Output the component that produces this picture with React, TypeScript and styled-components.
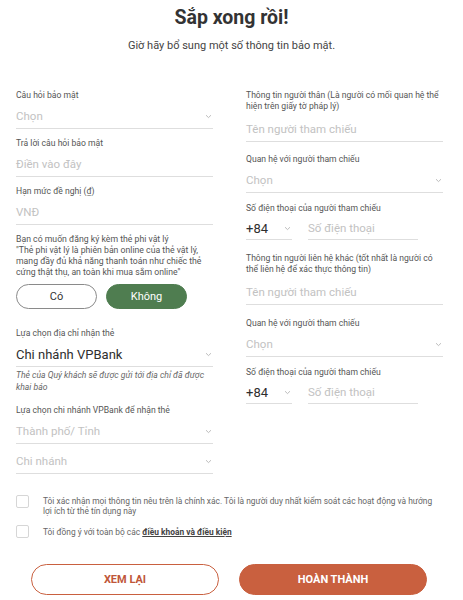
import React, { useState } from "react";
import styled, { createGlobalStyle } from "styled-components";

const GlobalStyle = createGlobalStyle`
	body {
		margin: 0;
		background: #ffffff;
		font-family: Roboto, "Noto Sans", "Liberation Sans", sans-serif;
	}
`;

function Chevron(): JSX.Element {
	return (
		<svg width="7" height="5" viewBox="0 0 7 5">
			<path d="M1 1.2 L3.5 3.6 L6 1.2" fill="none" stroke="#b5b5b5" strokeWidth="0.9" />
		</svg>
	);
}

interface SelectProps {
	value: string;
	filled?: boolean;
}

function SelectField(props: SelectProps): JSX.Element {
	return (
		<Field>
			<FieldText $filled={props.filled}>{props.value}</FieldText>
			<Chevron />
		</Field>
	);
}

function PhoneRow(): JSX.Element {
	return (
		<Phone>
			<Country>
				<FieldText $filled>+84</FieldText>
				<Chevron />
			</Country>
			<PhoneInput>
				<FieldText>Số điện thoại</FieldText>
			</PhoneInput>
		</Phone>
	);
}

function App(): JSX.Element {
	const [physical, setPhysical] = useState<boolean>(false);
	const [confirm, setConfirm] = useState<boolean>(false);
	const [agree, setAgree] = useState<boolean>(false);

	return (
		<Page>
			<GlobalStyle />
			<Title>Sắp xong rồi!</Title>
			<Subtitle>Giờ hãy bổ sung một số thông tin bảo mật.</Subtitle>

			<Form>
				<Column>
					<Group>
						<Label>Câu hỏi bảo mật</Label>
						<SelectField value="Chọn" />
					</Group>
					<Group>
						<Label>Trả lời câu hỏi bảo mật</Label>
						<Field>
							<FieldText>Điền vào đây</FieldText>
						</Field>
					</Group>
					<Group>
						<Label>Hạn mức đề nghị (₫)</Label>
						<Field>
							<FieldText>VNĐ</FieldText>
						</Field>
					</Group>
					<Paragraph>
						Bạn có muốn đăng ký kèm thẻ phi vật lý
						<br />
						"Thẻ phi vật lý là phiên bản online của thẻ vật lý, mang đầy đủ khả năng
						thanh toán như chiếc thẻ cứng thật thụ, an toàn khi mua sắm online"
					</Paragraph>
					<Toggle>
						<Choice $active={physical} onClick={() => setPhysical(true)}>
							Có
						</Choice>
						<Choice $active={!physical} onClick={() => setPhysical(false)}>
							Không
						</Choice>
					</Toggle>
					<Group $mt={19} $mb={0}>
						<Label>Lựa chọn địa chỉ nhận thẻ</Label>
						<SelectField value="Chi nhánh VPBank" filled />
						<Note>Thẻ của Quý khách sẽ được gửi tới địa chỉ đã được khai báo</Note>
					</Group>
					<Group $mt={12} $mb={0}>
						<Label>Lựa chọn chi nhánh VPBank để nhận thẻ</Label>
						<SelectField value="Thành phố/ Tỉnh" />
						<Spacer />
						<SelectField value="Chi nhánh" />
					</Group>
				</Column>

				<Column>
					<Group $mb={12}>
						<Label $multi>
							Thông tin người thân (Là người có mối quan hệ thể hiện trên giấy tờ pháp lý)
						</Label>
						<Field>
							<FieldText>Tên người tham chiếu</FieldText>
						</Field>
					</Group>
					<Group $mb={10}>
						<Label>Quan hệ với người tham chiếu</Label>
						<SelectField value="Chọn" />
					</Group>
					<Group $mb={13}>
						<Label>Số điện thoại của người tham chiếu</Label>
						<PhoneRow />
					</Group>
					<Group $mb={13}>
						<Label $multi>
							Thông tin người liên hệ khác (tốt nhất là người có thể liên hệ để xác thực
							thông tin)
						</Label>
						<Field>
							<FieldText>Tên người tham chiếu</FieldText>
						</Field>
					</Group>
					<Group $mb={10}>
						<Label>Quan hệ với người tham chiếu</Label>
						<SelectField value="Chọn" />
					</Group>
					<Group $mb={0}>
						<Label>Số điện thoại của người tham chiếu</Label>
						<PhoneRow />
					</Group>
				</Column>
			</Form>

			<Checks>
				<CheckRow>
					<Box $checked={confirm} onClick={() => setConfirm(!confirm)} />
					<CheckText>
						Tôi xác nhận mọi thông tin nêu trên là chính xác. Tôi là người duy nhất kiểm
						soát các hoạt động và hướng lợi ích từ thẻ tín dụng này
					</CheckText>
				</CheckRow>
				<CheckRow $center>
					<Box $checked={agree} onClick={() => setAgree(!agree)} />
					<CheckText>
						Tôi đồng ý với toàn bộ các <Terms>điều khoản và điều kiện</Terms>
					</CheckText>
				</CheckRow>
			</Checks>

			<Actions>
				<ActionButton>XEM LẠI</ActionButton>
				<ActionButton $primary>HOÀN THÀNH</ActionButton>
			</Actions>
		</Page>
	);
}

const Page = styled.div`
	width: 463px;
	height: 600px;
	padding-top: 6px;
	box-sizing: border-box;
	overflow: hidden;
	color: #333;
`;

const Title = styled.h1`
	margin: 0;
	font-size: 19.5px;
	line-height: 24px;
	font-weight: 700;
	color: #333;
	text-align: center;
`;

const Subtitle = styled.p`
	margin: 9px 0 0;
	font-size: 11px;
	line-height: 14px;
	color: #444;
	text-align: center;
`;

const Form = styled.div`
	display: grid;
	grid-template-columns: 197px 197px;
	column-gap: 33px;
	padding: 0 20px 0 16px;
	margin-top: 37px;
	align-items: start;
`;

const Column = styled.div`
	display: flex;
	flex-direction: column;
`;

const Group = styled.div<{ $mt?: number; $mb?: number }>`
	display: flex;
	flex-direction: column;
	margin-top: ${(p) => p.$mt ?? 0}px;
	margin-bottom: ${(p) => p.$mb ?? 9}px;
`;

const Label = styled.div<{ $multi?: boolean }>`
	font-size: 8.6px;
	line-height: 11px;
	color: #555;
	margin-bottom: ${(p) => (p.$multi ? 5 : 3)}px;
`;

const Field = styled.div`
	height: 24px;
	border-bottom: 1px solid #dedede;
	display: flex;
	align-items: center;
	justify-content: space-between;
	padding-right: 1px;
`;

const FieldText = styled.span<{ $filled?: boolean }>`
	font-size: ${(p) => (p.$filled ? "13px" : "11.5px")};
	color: ${(p) => (p.$filled ? "#2e2e2e" : "#c2c2c2")};
	white-space: nowrap;
`;

const Spacer = styled.div`
	height: 5px;
`;

const Paragraph = styled.p`
	margin: 0;
	font-size: 8.7px;
	line-height: 11px;
	color: #555;
`;

const Toggle = styled.div`
	display: flex;
	gap: 9px;
	margin-top: 6px;
`;

const Choice = styled.button<{ $active: boolean }>`
	width: 81px;
	height: 25px;
	border-radius: 13px;
	border: 1px solid ${(p) => (p.$active ? "#4f7d50" : "#8a8a8a")};
	background: ${(p) => (p.$active ? "#4f7d50" : "#fff")};
	color: ${(p) => (p.$active ? "#fff" : "#333")};
	font-family: inherit;
	font-size: 11px;
	padding: 0;
	cursor: pointer;
`;

const Note = styled.div`
	margin-top: 2px;
	font-size: 8.6px;
	line-height: 12px;
	font-style: italic;
	color: #666;
`;

const Phone = styled.div`
	display: flex;
	gap: 16px;
`;

const Country = styled.div`
	width: 46px;
	height: 23px;
	box-sizing: border-box;
	border-bottom: 1px solid #dedede;
	display: flex;
	align-items: center;
	justify-content: space-between;
	padding-right: 1px;
`;

const PhoneInput = styled.div`
	width: 110px;
	height: 23px;
	box-sizing: border-box;
	border-bottom: 1px solid #dedede;
	display: flex;
	align-items: center;
`;

const Checks = styled.div`
	padding: 0 24px 0 16px;
	margin-top: 21px;
	display: flex;
	flex-direction: column;
	gap: 9px;
`;

const CheckRow = styled.div<{ $center?: boolean }>`
	display: flex;
	align-items: ${(p) => (p.$center ? "center" : "flex-start")};
	gap: 14px;
`;

const Box = styled.div<{ $checked: boolean }>`
	flex: none;
	width: 13px;
	height: 13px;
	box-sizing: border-box;
	border: 1px solid #d6d6d6;
	border-radius: 2px;
	background: ${(p) => (p.$checked ? "#4f7d50" : "#fff")};
	cursor: pointer;
`;

const CheckText = styled.div`
	font-size: 8.4px;
	line-height: 10px;
	color: #666;
	padding-top: 1px;
`;

const Terms = styled.a`
	font-weight: 700;
	color: #444;
	text-decoration: underline;
`;

const Actions = styled.div`
	display: flex;
	gap: 20px;
	padding-left: 31px;
	margin-top: 26px;
`;

const ActionButton = styled.button<{ $primary?: boolean }>`
	width: 188px;
	height: 31px;
	border-radius: 16px;
	border: 1.5px solid #c9603f;
	background: ${(p) => (p.$primary ? "#c9603f" : "#fff")};
	color: ${(p) => (p.$primary ? "#fff" : "#c0573a")};
	font-family: inherit;
	font-size: 11px;
	font-weight: 700;
	padding: 0;
	cursor: pointer;
`;

export default App;
